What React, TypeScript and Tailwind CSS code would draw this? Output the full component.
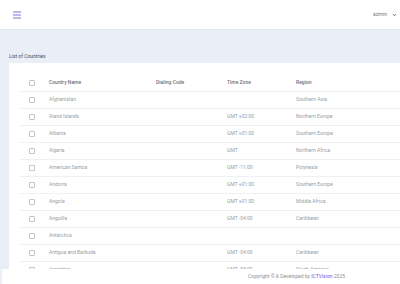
import React from 'react';

interface Country {
  name: string;
  code: string;
  tz: string;
  region: string;
}

const countries: Country[] = [
  { name: 'Afghanistan', code: '', tz: '', region: 'Southern Asia' },
  { name: 'Aland Islands', code: '', tz: 'GMT +02:00', region: 'Northern Europe' },
  { name: 'Albania', code: '', tz: 'GMT +01:00', region: 'Southern Europe' },
  { name: 'Algeria', code: '', tz: 'GMT', region: 'Northern Africa' },
  { name: 'American Samoa', code: '', tz: 'GMT -11:00', region: 'Polynesia' },
  { name: 'Andorra', code: '', tz: 'GMT +01:00', region: 'Southern Europe' },
  { name: 'Angola', code: '', tz: 'GMT +01:00', region: 'Middle Africa' },
  { name: 'Anguilla', code: '', tz: 'GMT -04:00', region: 'Caribbean' },
  { name: 'Antarctica', code: '', tz: '', region: '' },
  { name: 'Antigua and Barbuda', code: '', tz: 'GMT -04:00', region: 'Caribbean' },
  { name: 'Argentina', code: '', tz: 'GMT -03:00', region: 'South America' },
];

const Checkbox: React.FC = () => (
  <div className="w-[6px] h-[6px] border border-[#c3c5c9] rounded-[1px] bg-white" />
);

const App: React.FC = () => {
  return (
    <div
      className="w-[400px] h-[284px] flex flex-col overflow-hidden bg-[#e9eef7] text-[5px]"
      style={{ fontFamily: 'Roboto, "Liberation Sans", sans-serif' }}
    >
      {/* Header */}
      <header className="h-[30px] shrink-0 flex items-center justify-between bg-white border-b border-[#e2e5ea] pl-[13px] pr-[3px]">
        <button className="flex items-center">
          <svg width="9" height="8" viewBox="0 0 9 8">
            <rect x="0" y="0.5" width="8" height="1" fill="#8072d6" />
            <rect x="0" y="3.5" width="8" height="1" fill="#8072d6" />
            <rect x="0" y="6.5" width="8" height="1" fill="#8072d6" />
          </svg>
        </button>
        <div className="flex items-center gap-[5px] text-[#777b82]">
          <span className="text-[5px]">admin</span>
          <svg width="5" height="4" viewBox="0 0 5 4">
            <path d="M0.8 1 L2.5 2.8 L4.2 1" stroke="#666" strokeWidth="0.9" fill="none" />
          </svg>
        </div>
      </header>

      {/* Main */}
      <main className="flex-1 overflow-hidden pt-[21px] pl-[9px]">
        <h2 className="h-[10px] leading-[10px] text-[5px] text-[#4b4f56] mb-[2px]">List of Countries</h2>
        <div className="bg-white pt-[12px] pl-[11px]">
          <div className="grid grid-cols-[29px_107px_71px_69px_1fr] h-[17px] items-center border-b border-[#eef0f3] text-[#6e737b] font-medium">
            <div className="pl-[9px]"><Checkbox /></div>
            <div>Country Name</div>
            <div>Dialing Code</div>
            <div>Time Zone</div>
            <div>Region</div>
          </div>
          {countries.map((c) => (
            <div
              key={c.name}
              className="grid grid-cols-[29px_107px_71px_69px_1fr] h-[17px] items-center border-b border-[#eef0f3] text-[#9a9ea5]"
            >
              <div className="pl-[9px]"><Checkbox /></div>
              <div>{c.name}</div>
              <div>{c.code}</div>
              <div>{c.tz}</div>
              <div>{c.region}</div>
            </div>
          ))}
        </div>
      </main>

      {/* Footer */}
      <footer className="h-[15px] shrink-0 ml-[2px] bg-white flex items-center justify-end pr-[55px] text-[#8d9198]">
        <span>
          Copyright © &amp; Developed by <span className="text-[#6c5ce7]">ICTVision</span> 2025
        </span>
      </footer>
    </div>
  );
};

export default App;
